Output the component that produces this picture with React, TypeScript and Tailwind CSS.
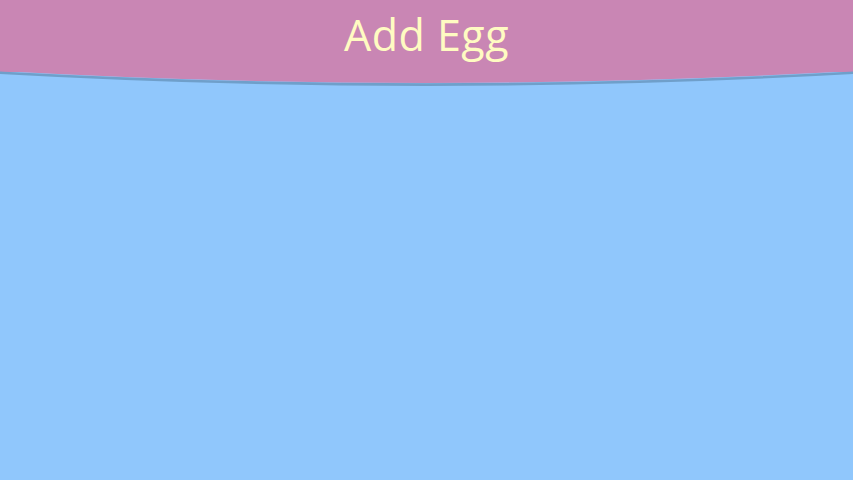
import React from "react";

export default function App() {
  return (
    <div className="relative h-[480px] w-[853px] overflow-hidden bg-[#90c7fc]">
      <div className="relative h-[72px] bg-[#c986b4] flex justify-center">
        <span
          className="mt-[9px] text-[43px] leading-[52px] tracking-[0.5px] text-[#fffbc2]"
          style={{ fontFamily: '"Open Sans", "Noto Sans", sans-serif' }}
        >
          Add Egg
        </span>
        <svg
          className="absolute left-0 top-[68px]"
          width="853"
          height="20"
          viewBox="0 0 853 20"
          preserveAspectRatio="none"
        >
          <path d="M0 3.5 Q426.5 27 853 3.5 L853 6 Q426.5 30 0 6 Z" fill="#6f9fca" />
          <path d="M0 0 L853 0 L853 3 Q426.5 27 0 3 Z" fill="#c986b4" />
        </svg>
      </div>
    </div>
  );
}
